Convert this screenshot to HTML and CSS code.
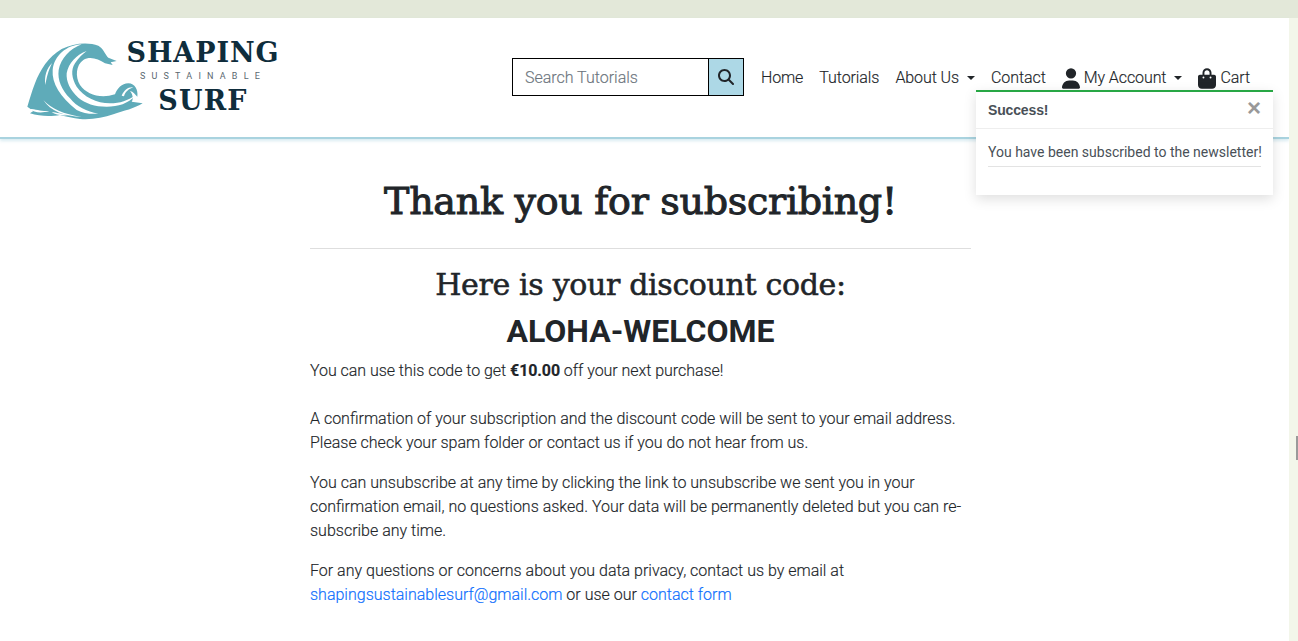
FILE: index.html
```html
<!DOCTYPE html>
<html lang="en">
<head>
<meta charset="utf-8">
<title>Thank you for subscribing</title>
<link rel="stylesheet" href="styles.css">
</head>
<body>
<div class="topstrip"></div>
<div class="shell">
  <div class="page">
    <header class="header">
      <a class="logo" href="#">
        <svg class="wave" viewBox="0 0 390 270" aria-hidden="true">
          <path fill="#5fabb9" d="M22 215C30 190 35 170 45 145C60 105 85 65 125 42C160 24 205 20 235 32C250 40 255 58 265 68L290 78L272 82L278 90L255 85C235 72 210 62 190 75C168 90 165 125 180 150C200 178 240 192 285 178C292 160 305 145 325 145C345 145 355 165 352 185C345 178 340 170 330 168C340 180 340 195 335 200L368 205C345 220 310 228 280 238C250 248 215 255 180 252C160 250 140 245 120 240C95 245 60 245 30 235L40 228Z"/>
          <g fill="#fff">
            <path d="M96 84C80 100 72 125 76 150C80 128 84 110 96 84Z"/>
            <path d="M185 28C140 30 102 62 98 105C95 145 120 185 170 225C190 235 210 238 235 236C200 230 170 215 150 190C125 165 112 135 116 105C122 70 150 42 185 28Z"/>
            <path d="M200 48C170 58 145 85 140 115C138 140 150 165 175 188C195 205 225 215 260 215C295 215 325 205 345 182C325 195 300 205 270 205C230 205 190 185 170 155C155 130 152 105 165 85C175 68 190 56 200 48Z"/>
            <path d="M70 195C95 222 130 238 185 245C135 245 90 228 70 195Z"/>
            <path d="M28 222C50 222 62 230 88 228C62 236 42 232 28 222Z"/>
            <path d="M95 232C110 232 125 238 150 240C125 243 108 240 95 232Z"/>
            <path d="M305 182C312 165 325 155 340 157C326 162 316 170 312 184Z"/>
          </g>
        </svg>
        <span class="logo-text">
          <span class="logo-top">SHAPING</span>
          <span class="logo-mid">SUSTAINABLE</span>
          <span class="logo-bot">SURF</span>
        </span>
      </a>
      <div class="nav-area">
        <form class="search">
          <input class="search-input" type="text" placeholder="Search Tutorials">
          <button class="search-btn" type="button" aria-label="Search">
            <svg viewBox="0 0 512 512" class="search-icon"><path fill="#212529" d="M416 208c0 45.900-14.900 88.300-40 122.700L502.600 457.400c12.500 12.500 12.500 32.800 0 45.300s-32.800 12.500-45.300 0L330.700 376c-34.400 25.200-76.800 40-122.700 40C93.100 416 0 322.900 0 208S93.100 0 208 0S416 93.100 416 208zM208 352a144 144 0 1 0 0-288 144 144 0 1 0 0 288z"/></svg>
          </button>
        </form>
        <nav class="nav">
          <a href="#">Home</a>
          <a href="#">Tutorials</a>
          <a href="#" class="caret">About Us</a>
          <a href="#">Contact</a>
          <a href="#" class="caret icon-link">
            <svg viewBox="0 0 448 512" class="nav-icon"><path fill="#212529" d="M224 256A128 128 0 1 0 224 0a128 128 0 1 0 0 256zm-45.700 48C79.800 304 0 383.800 0 482.300C0 498.700 13.300 512 29.700 512H418.300c16.400 0 29.700-13.300 29.700-29.700C448 383.800 368.200 304 269.700 304H178.300z"/></svg>My Account</a>
          <a href="#" class="icon-link">
            <svg viewBox="0 0 448 512" class="nav-icon"><path fill="#212529" d="M160 112c0-35.300 28.700-64 64-64s64 28.700 64 64v48H160V112zm-48 48H48c-26.500 0-48 21.500-48 48V416c0 53 43 96 96 96H352c53 0 96-43 96-96V208c0-26.500-21.500-48-48-48H336V112C336 50.100 285.900 0 224 0S112 50.100 112 112v48zm24 48a24 24 0 1 1 0 48 24 24 0 1 1 0-48zm152 24a24 24 0 1 1 48 0 24 24 0 1 1-48 0z"/></svg>Cart</a>
        </nav>
      </div>
    </header>
    <main class="content">
      <h1 class="title">Thank you for subscribing!</h1>
      <hr class="rule">
      <h2 class="subtitle">Here is your discount code:</h2>
      <p class="code">ALOHA-WELCOME</p>
      <p class="lead">You can use this code to get <strong>€10.00</strong> off your next purchase!</p>
      <p>A confirmation of your subscription and the discount code will be sent to your email address. Please check your spam folder or contact us if you do not hear from us.</p>
      <p>You can unsubscribe at any time by clicking the link to unsubscribe we sent you in your confirmation email, no questions asked. Your data will be permanently deleted but you can re-subscribe any time.</p>
      <p>For any questions or concerns about you data privacy, contact us by email at <a href="#">shapingsustainablesurf@gmail.com</a> or use our <a href="#">contact form</a></p>
    </main>
    <aside class="toast">
      <div class="toast-head"><strong class="toast-title">Success!</strong><span class="toast-close">×</span></div>
      <div class="toast-body"><div class="toast-msg">You have been subscribed to the newsletter!</div></div>
    </aside>
  </div>
  <div class="gutter"><span class="thumb"></span></div>
</div>
</body>
</html>
```
FILE: styles.css
```css
* { box-sizing: border-box; }
html, body { margin: 0; height: 100%; overflow: hidden; }
body { font-family: Roboto, "Liberation Sans", sans-serif; font-size: 16px; font-weight: 300; line-height: 24px; color: #212529; background: #fff; }
.topstrip { height: 18px; background: #e3e8d9; }
.shell { display: flex; height: 623px; }
.page { flex: 1; position: relative; background: #fff; }
.gutter { width: 9px; background: #f3f6ea; position: relative; }
.thumb { position: absolute; right: 0; top: 418px; width: 2px; height: 24px; background: #9a9a9a; }
.header { height: 121px; display: flex; justify-content: space-between; align-items: flex-start; border-bottom: 2px solid #a9d3df; box-shadow: 0 2px 3px rgba(169,211,223,.45); padding-left: 20px; }
.logo { display: flex; text-decoration: none; margin-top: 17px; }
.wave { width: 130px; height: 90px; margin-right: -22px; flex: none; }
.logo-text { display: flex; flex-direction: column; align-items: center; width: 150px; color: #0f2d3c; font-family: "DejaVu Serif", serif; font-weight: 700; padding-top: 3px; }
.logo-top { font-size: 27px; line-height: 30px; letter-spacing: .9px; }
.logo-mid { font-family: Roboto, sans-serif; font-weight: 400; font-size: 9px; line-height: 10px; letter-spacing: 6.2px; color: #5a6870; margin-top: 3px; white-space: nowrap; }
.logo-bot { font-size: 27px; line-height: 30px; letter-spacing: 1.2px; margin-top: 5px; }
.nav-area { display: flex; align-items: center; margin-top: 40px; padding-right: 31px; }
.search { display: flex; width: 232px; height: 38px; margin-right: 9px; }
.search-input { flex: 1; min-width: 0; border: 1px solid #000; border-right: 0; padding: 0 12px; font: 300 16px Roboto, sans-serif; color: #212529; outline: 0; border-radius: 0; }
.search-input::placeholder { color: #6c757d; opacity: 1; -webkit-text-stroke: .15px #6c757d; }
.search-btn { width: 36px; border: 1px solid #000; background: #add8e6; padding: 0; display: flex; align-items: center; justify-content: center; }
.search-icon { width: 16px; height: 16px; }
.nav { display: flex; align-items: center; padding-top: 2px; letter-spacing: -.085px; -webkit-text-stroke: .15px #212529; }
.nav a { color: #212529; text-decoration: none; padding: 0 8px; white-space: nowrap; display: flex; align-items: center; }
.caret::after { content: ""; margin-left: 8px; border-top: 4.8px solid #212529; border-left: 4.8px solid transparent; border-right: 4.8px solid transparent; }
.nav-icon { width: 18px; height: 21px; margin-right: 4px; }
.content { width: 661px; margin-left: 310px; padding-top: 39px; }
.title { font-family: "DejaVu Serif", serif; font-weight: 400; -webkit-text-stroke: 1px #212529; letter-spacing: -.28px; font-size: 38px; line-height: 46px; text-align: center; margin: 0 0 24px; }
.rule { border: 0; border-top: 1px solid #dedede; margin: 0 0 16px; }
.subtitle { font-family: "DejaVu Serif", serif; font-weight: 400; -webkit-text-stroke: .55px #212529; letter-spacing: -.33px; font-size: 30px; line-height: 40px; text-align: center; margin: 0; }
.code { font-weight: 700; font-size: 32px; line-height: 52px; text-align: center; }
.content p { margin: 0 0 16px; -webkit-text-stroke: .15px #212529; }
.content .code { margin: 0 0 2px; -webkit-text-stroke: 0; }
.content strong { font-weight: 700; letter-spacing: -.1px; }
.content .lead { margin-bottom: 24px; letter-spacing: -.04px; }
.content a { color: #0d6efd; text-decoration: none; -webkit-text-stroke: .15px #0d6efd; }
.toast { position: absolute; left: 976px; top: 72px; width: 297px; height: 105px; background: #fff; border-top: 2px solid #28a745; box-shadow: 0 4px 12px rgba(0,0,0,.13); font-size: 14px; font-weight: 400; color: #495057; }
.toast-head { height: 37px; padding: 0 12px; display: flex; align-items: center; justify-content: space-between; border-bottom: 1px solid #eee; }
.toast-title { font-family: "Liberation Sans", Arial, sans-serif; font-weight: 700; letter-spacing: -.15px; }
.toast-close { font-family: "Liberation Sans", Arial, sans-serif; font-size: 24px; font-weight: 700; color: #999; margin-top: -4px; }
.toast-body { padding: 11px 12px 0; }
.toast-msg { height: 27px; border-bottom: 1px solid #e3e3e3; white-space: nowrap; }
```
